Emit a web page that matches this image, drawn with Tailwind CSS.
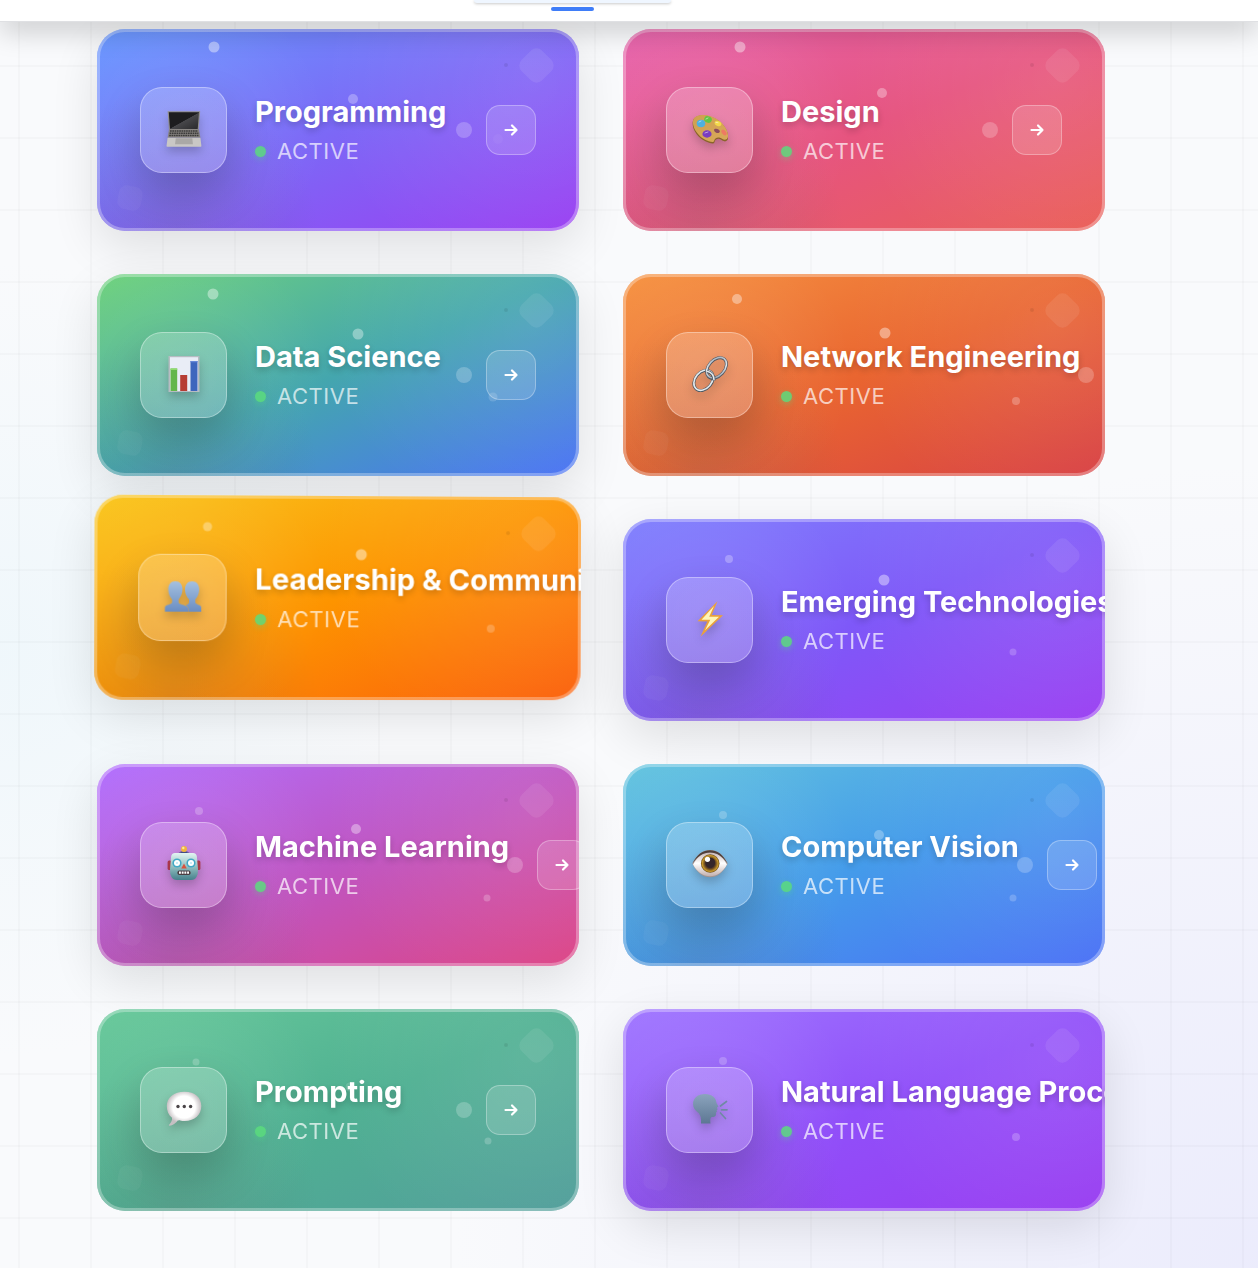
<!DOCTYPE html>
<html lang="en">
<head>
<meta charset="utf-8">
<meta name="viewport" content="width=device-width, initial-scale=1">
<title>Domains</title>
<script src="https://cdn.jsdelivr.net/npm/@tailwindcss/browser@4"></script>
</head>
<body class="min-h-screen overflow-x-hidden bg-[#f9fafc] font-[Inter,sans-serif]">
<div class="relative min-h-screen overflow-hidden bg-[radial-gradient(circle_at_0%_52%,rgba(225,243,250,0.4),transparent_28%),radial-gradient(circle_at_100%_100%,rgba(228,228,252,0.65),transparent_45%)]">
  <!-- page grid -->
  <div class="absolute inset-0 bg-[linear-gradient(to_right,rgba(0,0,0,0.02)_2px,transparent_2px),linear-gradient(to_bottom,rgba(0,0,0,0.02)_2px,transparent_2px)] bg-[size:72px_72px] bg-[position:18px_65px]"></div>

  <header class="relative z-10 h-[22px] border-b border-[#dfe0e3] bg-white pl-[474px] shadow-[0_8px_28px_rgba(0,0,0,0.22)]">
    <nav class="flex w-[197px] flex-col items-center gap-1" aria-label="Main">
      <div class="h-[3px] w-full rounded-b-[14px] bg-[#eff6ff] shadow-[0_1px_3px_rgba(0,0,0,0.22)]"></div>
      <div class="h-1 w-[43px] rounded-full bg-[#3f7df8]"></div>
    </nav>
  </header>

  <main id="grid" class="relative grid grid-cols-2 gap-x-11 gap-y-[43px] pt-[7px] pr-[153px] pb-[57px] pl-[97px]"></main>
</div>

<svg width="0" height="0" class="absolute" aria-hidden="true">
  <defs>
    <linearGradient id="screen" x1="0" y1="0" x2="1" y2="1"><stop offset=".5" stop-color="#1d1d1f"/><stop offset=".52" stop-color="#47474a"/><stop offset="1" stop-color="#29292b"/></linearGradient>
    <linearGradient id="wood" x1="0" y1="0" x2="1" y2="1"><stop stop-color="#cfa04e"/><stop offset="1" stop-color="#d9a95b"/></linearGradient>
    <linearGradient id="bust" x1="0" y1="0" x2="0" y2="1"><stop stop-color="#a4c0df"/><stop offset="1" stop-color="#6a8dc2"/></linearGradient>
    <linearGradient id="talk" x1="0" y1="0" x2="0" y2="1"><stop stop-color="#8ba4bd"/><stop offset="1" stop-color="#5d7793"/></linearGradient>
    <linearGradient id="metal" x1="0" y1="0" x2="0" y2="1"><stop stop-color="#e3f5f2"/><stop offset=".5" stop-color="#93bfc1"/><stop offset="1" stop-color="#45808b"/></linearGradient>
    <linearGradient id="steel" x1="0" y1="0" x2="1" y2="1"><stop stop-color="#9aa6b1"/><stop offset=".5" stop-color="#e3e9ee"/><stop offset="1" stop-color="#8893a0"/></linearGradient>
    <radialGradient id="iris"><stop offset=".45" stop-color="#39282a"/><stop offset=".6" stop-color="#6b4a1f"/><stop offset=".85" stop-color="#c99a2c"/><stop offset="1" stop-color="#5e4115"/></radialGradient>
    <radialGradient id="bubble" cx=".5" cy=".45"><stop offset=".65" stop-color="#ffffff"/><stop offset="1" stop-color="#c5bfc2"/></radialGradient>
    <linearGradient id="lid" x1="0" y1="0" x2="0" y2="1"><stop stop-color="#c9b9b8"/><stop offset=".45" stop-color="#ffffff"/><stop offset="1" stop-color="#c3b0ae"/></linearGradient>
  </defs>
  <symbol id="laptop" viewBox="0 0 36 36">
    <path d="M1.600.3h32.600L32.600 19H3z" fill="#8f8d8b"/><path d="M2.800 1.300H33L31.700 18H4z" fill="url(#screen)"/>
    <path d="M3 18.500h30l1.400 8.200H1.600z" fill="#85827f"/><path d="M4 20h28M3.600 22.300h28.800M3.200 24.600h29.600" stroke="#3c3b3b" stroke-width="1.500" stroke-dasharray="1.700 .6"/>
    <path d="M1.600 26.700h32.800l1 8.300q.1.800-.8.800H1.200Q.5 35.800.5 35z" fill="#c9c7c5"/><path d="M9.800 27.300h16.500l.6 6H9z" fill="#aaa8a6"/>
  </symbol>
  <symbol id="palette" viewBox="0 0 36 36">
    <path d="M.8 10.500C1.500 5 8 3.700 15 4.800c8 1.300 15 6.500 18.500 12.500 2.700 4.500 3.700 10 1.500 12.300-2.500 2.200-5-.8-7.500-1.600-2.500-.7-4 .8-4.600 2-.8 1.400-.3 2.300-2 2.400C10 31.500-.8 20.500.8 10.500z" fill="#8a6429"/>
    <path d="M1 10C1.500 5 8 3.200 15 4.200c8 1.300 15 6.500 18.300 12.300 2.700 4.500 3.700 9.500 1.500 11.600-2.500 1.900-5-.8-7.500-1.500-2.500-.6-4.200.8-4.700 2-.7 1.400-.4 2.600-2 2.500C10 30 0 19 1 10z" fill="url(#wood)"/>
    <path d="M22.500 18c2-1 5 .3 5.300 2.300.2 2-2.500 2.200-4 1.200s-2.300-2.500-1.300-3.500z" fill="#8b4c5b"/>
    <ellipse cx="9" cy="12.500" rx="4.300" ry="3.700" fill="#4fb0de"/><ellipse cx="16" cy="8.500" rx="3.900" ry="3.200" transform="rotate(20 16 8.500)" fill="#62c545"/><ellipse cx="26" cy="12.500" rx="3.500" ry="2.500" transform="rotate(25 26 12.500)" fill="#f2d94a"/><ellipse cx="32" cy="21.500" rx="3.300" ry="2" transform="rotate(50 32 21.500)" fill="#ee7a62"/><ellipse cx="15" cy="23" rx="4.600" ry="3.700" fill="#7a3cc0"/>
    <path d="M7 11l2-1M14 8l2-1M24 11.500l2 .2M13 22l3-1" stroke="#fff" stroke-opacity=".5" stroke-linecap="round"/>
  </symbol>
  <symbol id="chart" viewBox="0 0 36 36">
    <path d="M2.500 0h31v36h-31z" fill="#b6bcc2"/><path d="M4 1.200h28V35H4z" fill="#e9edf6"/>
    <path d="M4.500 12.500h6.700V35H4.500z" fill="#63b64b"/><path d="M4.500 12.500h6.700v1.500H4.500z" fill="#8fdc6c"/>
    <path d="M14.200 19h7V35h-7z" fill="#b63d34"/><path d="M24.500 5h7v30h-7z" fill="#3e66bd"/><path d="M24.500 5h7v1.300h-7z" fill="#6688d8"/>
  </symbol>
  <symbol id="link" viewBox="0 0 36 36" fill="none">
    <ellipse cx="11.500" cy="24.500" rx="8.300" ry="11.300" transform="rotate(40 11.500 24.500)" stroke="#4c5963" stroke-width="3"/>
    <ellipse cx="11.500" cy="24.200" rx="8.300" ry="11.300" transform="rotate(40 11.500 24.200)" stroke="#e4eaed" stroke-width="1.600"/>
    <ellipse cx="24.500" cy="12" rx="8" ry="11.800" transform="rotate(42 24.500 12)" stroke="#4c5662" stroke-width="3"/>
    <ellipse cx="24.500" cy="11.700" rx="8" ry="11.800" transform="rotate(42 24.500 11.700)" stroke="url(#steel)" stroke-width="1.600"/>
    <path d="M15 15.500q7 1.500 7 9" stroke="#4c5662" stroke-width="3"/><path d="M15 15.300q7 1.500 7 9" stroke="#e5eaed" stroke-width="1.500"/>
  </symbol>
  <symbol id="people" viewBox="0 0 36 36">
    <path d="M10.500 3c4.500 0 7 3.300 7 8 0 4-2 7.800-3.800 9.800v3.200c1 3 9.800 1.200 9.800 7.500V33H.3v-4.500c.7-2.500 6-2.300 7-4.500v-3.200C5.200 19 3.500 15 3.500 11c0-4.700 2.500-8 7-8z" fill="url(#bust)"/>
    <path d="M27 3c4.500 0 7 3.300 7 8 0 4-1.800 7.800-3.800 9.800V24c1 2.200 5.600 2 5.800 4.500V33H23.500c.5-4-1-5.300-3-6.200 1.500-.7 3.200-1.300 3.500-2.800v-3.200c-2-1.800-4-5.800-4-9.800 0-4.700 2.500-8 7-8z" fill="url(#bust)"/>
  </symbol>
  <symbol id="bolt" viewBox="0 0 36 36">
    <path d="M25.500.3 5.500 20.300l9.800.2L8.500 35.700 31 14.300l-11.300-.2z" fill="#eaa13c"/><path d="M22 5 9.500 18.800h8.800L13 29.300 27 15.800h-9.800z" fill="#fff6b8"/>
  </symbol>
  <symbol id="robot" viewBox="0 0 36 36">
    <path d="M14.500 5.500h7V9h-7z" fill="#3f4d7a"/><path d="M13 6.500h10l1 2H12z" fill="#48508a"/><circle cx="18" cy="3" r="3" fill="#f0b53e"/><circle cx="17.300" cy="2" r="1.200" fill="#ffe89a"/>
    <rect x="1.600" y="14.500" width="4" height="9.500" rx="1.500" fill="#a8374a"/><rect x="30.400" y="14.500" width="4" height="9.500" rx="1.500" fill="#a8374a"/>
    <path d="M9 7h18q3 0 3.800 3L32 23q.3 5-1.500 8-1.500 3-5.500 3H11q-4 0-5.500-3-1.800-3-1.500-8l1.200-13Q6 7 9 7z" fill="url(#metal)"/>
    <circle cx="11" cy="17" r="4.600" fill="#43a9c5"/><circle cx="25" cy="17" r="4.600" fill="#43a9c5"/><circle cx="11" cy="17" r="3" fill="#fff"/><circle cx="25" cy="17" r="3" fill="#fff"/><circle cx="11" cy="17" r="1" fill="#b8e7f5"/><circle cx="25" cy="17" r="1" fill="#b8e7f5"/>
    <path d="M18 17.500l2.800 5h-5.600z" fill="#d9523e"/><rect x="11.500" y="24.500" width="13" height="4.500" rx="1.800" fill="#4a3c42"/><path d="M13 26.700h10" stroke="#fff" stroke-width="2.200" stroke-dasharray="1.900 .8"/>
  </symbol>
  <symbol id="eye" viewBox="0 0 36 36">
    <path d="M.3 17.500C5 8 11 4 18 4s13 4 17.700 13.500C31 27 25 31.300 18 31.300S5 27 .3 17.500z" fill="#a29491"/>
    <path d="M1 18.500C6 10 11 6.500 18 6.500s12 3.500 17 12C31 26 25 30.300 18 30.300S5 26 1 18.500z" fill="url(#lid)"/>
    <circle cx="18.200" cy="17.500" r="9.300" fill="url(#iris)"/><circle cx="18.200" cy="16.500" r="4.800" fill="#33262a"/><circle cx="15.500" cy="13.300" r="2.600" fill="#fff"/>
    <path d="M.5 17.500C5 8 11 4.200 18 4.200S31 8 35.500 17.500C30 10 25 6.500 18 6.500S6 10 .5 17.500z" fill="#4f403c"/>
  </symbol>
  <symbol id="speech" viewBox="0 0 36 36">
    <path d="M18.500.8C29 .8 35.300 6.500 35.300 15S29 30 18.500 30c-2.300 0-4.800-.2-6.500-.8-2 3-5.500 5.300-8.500 5.500-.8 0-.8-.7-.2-1.200 1.800-1.500 3.200-4.500 2.700-6.700C2.500 24 .8 20 .8 15 .8 6.500 8 .8 18.500.8z" fill="url(#bubble)"/>
    <circle cx="12" cy="15.500" r="1.700" fill="#4a4548"/><circle cx="18.300" cy="15.500" r="1.700" fill="#4a4548"/><circle cx="24.600" cy="15.500" r="1.700" fill="#4a4548"/>
  </symbol>
  <symbol id="talking" viewBox="0 0 36 36">
    <path d="M13 3c7 0 11 3.500 11.500 9l2 3.500-1.500 1 .5 2-.9 1 .4 1.200-1 .8c.3 3-.5 4.500-3.500 4.500-2 0-2.500 1.500-2 6.500H9c.3-5-.3-8-2.500-10.500C3 19.500 1 16.500 1 13 1 7 6 3 13 3z" fill="url(#talk)"/>
    <path d="M28.500 15l6-4.500M29.500 18.800H35M28.500 22l5 5.500" stroke="#7089a5" stroke-width="1.700" stroke-linecap="round"/>
  </symbol>
</svg>

<script>
  // dots: [x, y, diameter, opacity] inside the card
  const cards = [
    { title: 'Programming', icon: 'laptop', raised: true, colors: ['#6899ff', '#7c68f6', '#9a3ff2'], dots: [[117, 18, 11, .42], [256, 70, 10, .28], [401, 110, 10, .04]] },
    { title: 'Design', icon: 'palette', colors: ['#e765ae', '#e6547f', '#ea5f57'], dots: [[117, 18, 11, .42], [259, 64, 10, .32]] },
    { title: 'Data Science', icon: 'chart', raised: true, colors: ['#6fd27c', '#44a6ae', '#4b72f6'], dots: [[116, 20, 11, .4], [261, 60, 11, .36], [396, 123, 9, .15]] },
    { title: 'Network Engineering', icon: 'link', colors: ['#f69342', '#e96530', '#d84145'], dots: [[114, 25, 10, .38], [262, 59, 11, .4], [393, 127, 8, .24]] },
    { title: 'Leadership & Communication', icon: 'people', raised: true, tilted: true, colors: ['#f9c71f', '#fd9400', '#fb600d'], dots: [[111, 31, 9, .33], [263, 58, 11, .45], [392, 131, 8, .22]] },
    { title: 'Emerging Technologies', icon: 'bolt', raised: true, colors: ['#8182fd', '#7e58f8', '#9b3ff2'], dots: [[106, 40, 8, .27], [261, 61, 11, .4], [390, 133, 7, .2]] },
    { title: 'Machine Learning', icon: 'robot', raised: true, colors: ['#b170ff', '#bf55c2', '#dd4484'], dots: [[102, 47, 8, .24], [259, 65, 10, .36], [390, 134, 7, .22]] },
    { title: 'Computer Vision', icon: 'eye', colors: ['#64c5de', '#449bea', '#4b70f6'], dots: [[100, 51, 8, .22], [256, 71, 10, .28], [390, 134, 7, .2]] },
    { title: 'Prompting', icon: 'speech', colors: ['#68c99a', '#4fb092', '#529e9b'], dots: [[99, 53, 7, .22], [253, 78, 9, .16], [391, 132, 7, .2]] },
    { title: 'Natural Language Processing', icon: 'talking', raised: true, colors: ['#a078ff', '#904ff9', '#993df1'], dots: [[100, 52, 8, .22], [393, 128, 8, .22]] },
  ];

  const dot = ([x, y, d, o]) =>
    `<span class="absolute -translate-x-1/2 -translate-y-1/2 rounded-full bg-white" style="left:${x}px;top:${y}px;width:${d}px;height:${d}px;opacity:${o}"></span>`;

  document.getElementById('grid').innerHTML = cards.map(c => `
    <article class="relative h-[202px] min-w-0 overflow-hidden rounded-[28px] ${c.raised ? 'shadow-[0_16px_48px_rgba(0,0,0,0.11)]' : ''} ${c.tilted ? '[transform:perspective(1440px)_translate(1px,-22px)_rotateZ(0.15deg)_rotateY(2deg)_scale(1.01)]' : ''}"
      style="background-image:linear-gradient(to bottom right,${c.colors})">
      <div class="absolute inset-0 bg-[radial-gradient(circle_at_18%_48%,rgba(255,255,255,0.08),transparent_35%),radial-gradient(circle_at_90%_25%,rgba(255,255,255,0.09),transparent_45%),radial-gradient(circle_at_16%_100%,rgba(90,90,90,0.18),transparent_32%)]"></div>
      <div class="absolute inset-0 rounded-[28px] border-3 border-white/30"></div>
      <span class="absolute top-[22px] right-7 size-[29px] rotate-45 rounded-lg bg-white/8"></span>
      <span class="absolute bottom-[21px] left-[21px] size-6 rotate-12 rounded-lg bg-white/4"></span>
      <span class="absolute top-[34px] left-[407px] size-1 rounded-full bg-black/8"></span>
      ${c.dots.map(dot).join('')}
      <div class="relative flex h-full items-center px-[43px]">
        <div class="flex h-[86px] w-[87px] shrink-0 items-center justify-center rounded-[22px] border border-white/35 bg-white/20 shadow-[0_20px_44px_rgba(0,0,0,0.2)]">
          <svg class="mb-0.5 size-9 drop-shadow-[0_5px_5px_rgba(0,0,0,0.2)]" aria-hidden="true"><use href="#${c.icon}"/></svg>
        </div>
        <div class="ml-7 flex-1 whitespace-nowrap">
          <h3 class="text-[29px] leading-9 font-bold text-white [text-shadow:0_3px_6px_rgba(0,0,0,0.2)]">${c.title.replace('&', '&amp;')}</h3>
          <p class="mt-[7px] flex items-center gap-[11px] text-[22px] leading-[29px] tracking-wide text-white/70"><span class="size-[11px] rounded-full bg-[#5bdc7c]/85 shadow-[0_2px_6px_rgba(74,222,128,0.4)]"></span>ACTIVE</p>
        </div>
        <div class="relative ml-7 shrink-0">
          <span class="absolute top-[17px] -left-[30px] size-4 rounded-full bg-white/22"></span>
          <button type="button" aria-label="Open ${c.title.replace('&', '&amp;')}" class="flex size-[50px] items-center justify-center rounded-[14px] border border-white/30 bg-white/15">
            <svg class="size-4" viewBox="0 0 16 16" fill="none" stroke="#fff" stroke-width="2.200" stroke-linecap="round" stroke-linejoin="round" aria-hidden="true"><path d="M2.500 8h11M9 3.500 13.500 8 9 12.500"/></svg>
          </button>
        </div>
      </div>
    </article>`).join('');
</script>
</body>
</html>
